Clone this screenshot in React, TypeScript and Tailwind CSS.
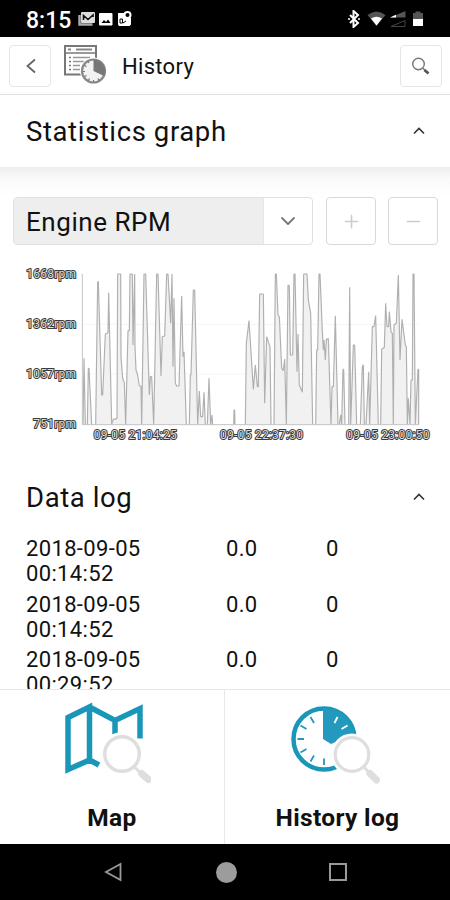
import type { ReactNode } from "react";
import { ChevronDown, Minus, Plus } from "lucide-react";

const BASE = 494;

// each run is a list of [x, y] samples, drawn on a 1350x570 canvas
const runs: number[][][] = [
    [[249, 494], [252, 295], [256, 494]],
    [[262, 494], [265, 325], [267, 325], [275, 494]],
    [
        [287, 494], [293, 65], [295, 65], [305, 405], [308, 405], [316, 222], [324, 218], [326, 98], [335, 492], [340, 478],
        [351, 476], [353, 42], [362, 42], [363, 290], [368, 355], [373, 368], [377, 494], [384, 212], [388, 212],
        [390, 42], [397, 42], [399, 255], [404, 42], [405, 260], [408, 330], [413, 345], [418, 378], [423, 378],
        [425, 494], [432, 42], [437, 42], [448, 405], [451, 350], [455, 350], [461, 494], [470, 42], [474, 42],
        [483, 348], [487, 230], [494, 228], [500, 42], [504, 42], [512, 190], [516, 42], [519, 320], [522, 115],
        [526, 370], [530, 378], [537, 378], [545, 108], [549, 290], [552, 275], [559, 494],
    ],
    [
        [568, 494], [571, 345], [573, 345], [580, 90], [584, 90], [593, 494], [598, 393], [602, 470], [608, 470],
        [612, 397], [616, 494],
    ],
    [[622, 494], [627, 355], [632, 494], [636, 465], [638, 494]],
    [[701, 494], [702, 450], [704, 450], [705, 494]],
    [
        [736, 494], [739, 250], [747, 182], [760, 388], [766, 315], [772, 380], [775, 380], [779, 102], [790, 102],
        [794, 430], [800, 230], [810, 260], [813, 494],
    ],
    [
        [822, 494], [826, 42], [829, 42], [834, 165], [838, 170], [845, 325], [850, 332], [854, 297], [859, 494],
        [864, 75], [868, 78], [871, 285], [878, 285], [882, 42], [885, 42], [891, 335], [894, 222], [898, 375],
        [907, 397], [911, 42], [921, 42], [925, 120], [932, 160], [938, 494],
    ],
    [
        [947, 494], [950, 270], [953, 270], [957, 42], [960, 42], [967, 215], [970, 270], [972, 240], [976, 300],
        [979, 238], [985, 236], [993, 494], [996, 380], [1000, 380], [1006, 167], [1014, 494],
    ],
    [[1018, 494], [1022, 465], [1025, 494], [1029, 328], [1031, 328], [1035, 494]],
    [[1046, 494], [1049, 82], [1052, 494], [1060, 255], [1064, 255], [1070, 494]],
    [[1081, 494], [1087, 320], [1090, 314], [1093, 494]],
    [[1098, 494], [1106, 335], [1109, 494], [1117, 200], [1122, 200], [1127, 167], [1135, 494]],
    [
        [1142, 494], [1145, 268], [1153, 262], [1157, 130], [1161, 200], [1166, 200], [1168, 155], [1173, 215],
        [1177, 220], [1180, 494], [1182, 195], [1189, 190], [1195, 45], [1200, 300], [1206, 178], [1216, 255],
        [1219, 260], [1222, 494], [1225, 415], [1230, 494], [1233, 360], [1237, 360], [1239, 42], [1242, 42],
        [1246, 494], [1254, 328], [1256, 328], [1256, 494],
    ],
];

const yLabels = [
    { text: "1668rpm", y: 54 },
    { text: "1362rpm", y: 205 },
    { text: "1057rpm", y: 354 },
    { text: "751rpm", y: 505 },
];

const xLabels = [
    { text: "09-05 21:04:25", x: 406 },
    { text: "09-05 22:37:30", x: 785 },
    { text: "09-05 23:00:50", x: 1164 },
];

const entries = [
    { date: "2018-09-05", time: "00:14:52", distance: "0.0", count: "0" },
    { date: "2018-09-05", time: "00:14:52", distance: "0.0", count: "0" },
    { date: "2018-09-05", time: "00:29:52", distance: "0.0", count: "0" },
];

function StatusBar() {
    return (
        <div className="flex h-[37px] shrink-0 items-center justify-between bg-black pl-[26px] pr-[25px] text-white">
            <div className="flex items-center">
                <span className="w-[51px] pt-[3px] text-[23px] font-medium leading-none">8:15</span>
                <svg width="56" height="16" viewBox="0 0 56 16">
                    <path d="M2.500 4v9.500h13" fill="none" stroke="#aaa" strokeWidth="2.500" />
                    <rect x="4" y="1" width="14" height="11" rx="1" fill="#ddd" />
                    <path d="M6.500 9V4.500l4.500 4 5-4.500v2" fill="none" stroke="#111" strokeWidth="1.600" />
                    <rect x="22" y="2" width="13.500" height="12.500" rx="1" fill="#fff" />
                    <path d="M24.500 12l2.500-3 2 2 2-2.500 2.500 3.500z" fill="#000" />
                    <path d="M41 2h8v5h5v6.500l-1.500 1.500H42l-1-1.500z" fill="#fff" />
                    <circle cx="50.500" cy="4" r="3" fill="#000" stroke="#fff" strokeWidth="2" />
                    <path d="M43 12V8h2.500v4zM46 12l3-2" fill="none" stroke="#000" />
                </svg>
            </div>
            <svg width="78" height="18" viewBox="0 0 78 18">
                <path d="M3 5l8 8-4.500 4V1L11 5l-8 8" fill="none" stroke="#fff" strokeWidth="2" />
                <circle cx="2" cy="9" r="1" fill="#fff" />
                <circle cx="12" cy="9" r="1" fill="#fff" />
                <path d="M20.500 5q9-7 18 0l-9 11z" fill="#555" />
                <path d="M24 8.500q5.500-3.500 11 0l-5.500 7z" fill="#fff" />
                <path d="M43 7.500L58.500 1v6.500z" fill="#555" />
                <path d="M43 7.500l6-2.700v2.700z" fill="#fff" />
                <path d="M44 16.500l14-6v6z" fill="none" stroke="#444" />
                <path d="M66 3h2.500V1.500h5V3H76v6H66z" fill="#555" />
                <path d="M66 9h10v7H66z" fill="#fff" />
            </svg>
        </div>
    );
}

function IconButton({ children, className = "" }: { children: ReactNode; className?: string }) {
    return (
        <button className={`flex shrink-0 items-center justify-center rounded border bg-white ${className}`}>
            {children}
        </button>
    );
}

function HistoryIcon() {
    return (
        <svg width="44" height="40" viewBox="0 0 44 40" className="mb-1 ml-3">
            <path d="M2 2h31v28.500H2z" fill="#fff" stroke="#777" strokeWidth="2" />
            <path d="M2 9h31" stroke="#777" strokeWidth="1.500" />
            <path d="M5 5.500h3M13 5.500h16" stroke="#888" strokeWidth="1.800" />
            <path d="M6 13.500h2M6 17.500h2M6 21.500h2M6 25.500h2" stroke="#777" strokeWidth="1.600" />
            <path d="M10 13.500h17M10 17.500h11M10 21.500h7M10 25.500h7" stroke="#999" strokeWidth="1.400" />
            <circle cx="30.500" cy="27" r="13.500" fill="#fff" />
            <circle cx="30.500" cy="27" r="11.500" fill="#f2f2f2" stroke="#888" strokeWidth="2.200" />
            <path d="M30.500 27V15.500a11.500 11.500 0 0 1 10.500 16.500z" fill="#777" />
            <path d="M25 17l1 2M21.500 21.500l2 1M20 27.500h2M21.500 32.500l2-1M25.500 36.500l1-2M30.500 38v-2M36 36.500l-1-2" stroke="#777" strokeWidth="1.200" />
        </svg>
    );
}

function Header() {
    return (
        <header className="flex h-[58px] shrink-0 items-center border-b border-[#e2e2e2] pl-[9px] pr-2">
            <IconButton className="h-[42px] w-[42px] border-[#e6e6e6]">
                <svg width="12" height="18" viewBox="0 0 12 18" className="ml-px">
                    <path d="M10 2.500L2.500 9l7.500 6.500" fill="none" stroke="#666" strokeWidth="1.800" />
                </svg>
            </IconButton>
            <HistoryIcon />
            <h1 className="ml-[15px] flex-1 pt-0.5 text-[22px] leading-none tracking-[0.3px]">History</h1>
            <IconButton className="h-[42px] w-[42px] border-[#e6e6e6]">
                <svg width="20" height="20" viewBox="0 0 20 20">
                    <circle cx="7.500" cy="8" r="5.800" fill="none" stroke="#777" strokeWidth="1.400" />
                    <path d="M12 12.300l2 2" stroke="#777" strokeWidth="1.400" />
                    <path d="M13.500 14l4 3.500" stroke="#555" strokeWidth="2.800" />
                </svg>
            </IconButton>
        </header>
    );
}

function SectionTitle({ title, className = "" }: { title: string; className?: string }) {
    return (
        <div className={`flex shrink-0 items-center justify-between pl-[26px] pr-6 ${className}`}>
            <h2 className="pt-0.5 text-[27.5px] leading-none tracking-[0.6px]">{title}</h2>
            <svg width="14" height="10" viewBox="0 0 14 10">
                <path d="M2 7.500l5-5 5 5" fill="none" stroke="#333" strokeWidth="1.600" />
            </svg>
        </div>
    );
}

function Controls() {
    return (
        <div className="flex h-12 shrink-0 gap-3 pl-[13px] pr-3">
            <div className="mr-px flex w-[300px] overflow-hidden rounded border border-[#e0e0e0]">
                <div className="flex flex-1 items-center bg-[#eee] pl-3 pt-0.5 text-[26px] leading-none tracking-[0.55px]">
                    Engine RPM
                </div>
                <div className="flex w-[49px] items-center justify-center border-l border-[#e6e6e6]">
                    <ChevronDown size={24} strokeWidth={1.8} color="#777" />
                </div>
            </div>
            <IconButton className="w-[50px] border-[#d9d9d9]">
                <Plus size={21} strokeWidth={1.8} color="#ccc" />
            </IconButton>
            <IconButton className="w-[50px] border-[#d9d9d9]">
                <Minus size={21} strokeWidth={1.8} color="#ccc" />
            </IconButton>
        </div>
    );
}

function RpmChart() {
    return (
        <svg width="450" height="190" viewBox="0 0 1350 570" className="shrink-0">
            <path d="M247 193H1256M247 342H1256" stroke="#f4f4f4" strokeWidth="3" />
            {runs.map((run, i) => (
                <polyline
                    key={i}
                    points={run.map((p) => p.join(",")).join(" ")}
                    fill="#f1f1f1"
                    stroke="#b0b0b0"
                    strokeWidth="3.5"
                    strokeLinejoin="bevel"
                />
            ))}
            <path d={`M247 42V${BASE}H1256`} fill="none" stroke="#c4c4c4" strokeWidth="3" />
            <g className="text-[36px] tracking-[0.8px]" fill="#ddd" stroke="#3a3a3a" strokeWidth="6" paintOrder="stroke" strokeLinejoin="round">
                {yLabels.map((l) => (
                    <text key={l.text} x="229" y={l.y} textAnchor="end">{l.text}</text>
                ))}
                {xLabels.map((l) => (
                    <text key={l.text} x={l.x} y="536" textAnchor="middle">{l.text}</text>
                ))}
            </g>
        </svg>
    );
}

function DataLog() {
    return (
        <div className="min-h-0 flex-1 overflow-hidden pl-[26px] pt-px text-[22px] leading-[25px] tracking-[0.35px] text-[#111]">
            {entries.map((e, i) => (
                <div key={i} className="mb-[5.6px] grid grid-cols-[200px_100px_1fr]">
                    <div>
                        <div>{e.date}</div>
                        <div>{e.time}</div>
                    </div>
                    <div>{e.distance}</div>
                    <div>{e.count}</div>
                </div>
            ))}
        </div>
    );
}

function MapIcon() {
    return (
        <svg width="90" height="82" viewBox="0 0 90 82" className="mr-3">
            <path d="M7 15.500L28.500 5v53L7 67.500zM28.500 5L54 18.500 79 6.500v30M54 18.500v14M28.500 58l9.500 5" fill="none" stroke="#1a97b8" strokeWidth="5.500" />
            <circle cx="61" cy="52" r="22" fill="#fff" />
            <circle cx="61" cy="52" r="17.300" fill="#fff" stroke="#dedede" strokeWidth="3.500" />
            <path d="M73 64.500l6 6" stroke="#dedede" strokeWidth="3" />
            <path d="M80.500 71.500l7 6" stroke="#dedede" strokeWidth="7" strokeLinecap="round" />
        </svg>
    );
}

function ClockIcon() {
    return (
        <svg width="90" height="82" viewBox="0 0 90 82" className="mr-1.5">
            <circle cx="34" cy="37" r="30.500" fill="#fff" stroke="#1a97b8" strokeWidth="4.500" />
            <path d="M33 37V6a31 31 0 0 1 31 26L41 42z" fill="#2399bd" />
            <path d="M20.500 15l3.500 6M10.500 23.500l6 3.500M7.500 37H14M10.500 50.500l6-3.500M20.500 59.500l3.500-6M34 63v-6.500" stroke="#2399bd" strokeWidth="1.800" />
            <path d="M47.500 15l-3 6M57.500 23.500l-6 3.500" stroke="#fff" strokeWidth="1.800" />
            <circle cx="62" cy="52.500" r="21" fill="#fff" />
            <circle cx="62" cy="52.500" r="16.800" fill="#fff" stroke="#dedede" strokeWidth="3.300" />
            <path d="M73.500 64.500l5 5.500" stroke="#dedede" strokeWidth="3" />
            <path d="M80 71.500l6.500 6.500" stroke="#dedede" strokeWidth="7" strokeLinecap="round" />
        </svg>
    );
}

function BottomTabs() {
    return (
        <div className="grid h-[155px] shrink-0 grid-cols-2 border-t border-[#e8e8e8] bg-white text-[24.5px] font-bold leading-none tracking-[0.35px]">
            <button className="flex flex-col items-center border-r border-[#e8e8e8] pt-3">
                <MapIcon />
                <span className="mt-[22px]">Map</span>
            </button>
            <button className="flex flex-col items-center pt-3">
                <ClockIcon />
                <span className="mt-[22px]">History log</span>
            </button>
        </div>
    );
}

function AndroidNav() {
    return (
        <div className="flex h-14 shrink-0 items-center justify-between bg-black pl-[103px] pr-[103px]">
            <svg width="20" height="20" viewBox="0 0 20 20">
                <path d="M17.500 2v16L3 10z" fill="none" stroke="#999" strokeWidth="1.800" />
            </svg>
            <div className="h-[21px] w-[21px] rounded-full bg-[#9c9c9c]" />
            <div className="h-[18px] w-[18px] border-2 border-[#999]" />
        </div>
    );
}

export default function App() {
    return (
        <div className="flex h-[900px] w-[450px] flex-col overflow-hidden bg-white font-['Roboto',sans-serif] text-[#111]">
            <StatusBar />
            <Header />
            <SectionTitle title="Statistics graph" className="h-[72px]" />
            <div className="h-[30px] shrink-0 bg-linear-to-b from-[#eee] via-[#fafafa] via-40% to-white" />
            <Controls />
            <div className="h-[15px] shrink-0" />
            <RpmChart />
            <SectionTitle title="Data log" className="h-[85px] pt-2" />
            <DataLog />
            <BottomTabs />
            <AndroidNav />
        </div>
    );
}
